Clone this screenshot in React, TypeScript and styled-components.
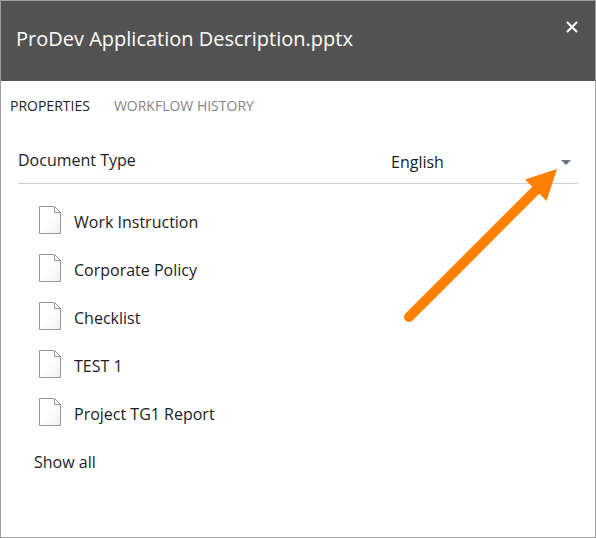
import React from 'react';
import styled, { createGlobalStyle } from 'styled-components';

const Global = createGlobalStyle`
  *{box-sizing:border-box}
  body{margin:0;background:#fff;font-family:"Open Sans","Noto Sans",sans-serif;font-weight:400;color:#1c1c1c}
`;
const Dialog = styled.div`width:596px;height:538px;border:1px solid #9c9c9c;background:#fff;display:flex;flex-direction:column;`;
const Header = styled.header`height:80px;background:#535353;color:#fff;display:flex;justify-content:space-between;padding:0 15px;`;
const Title = styled.h1`margin:0;font-size:20px;font-weight:400;line-height:76px;white-space:nowrap;`;
const Close = styled.button`border:0;background:none;padding:0;margin:20px 2px 0 0;width:12px;height:12px;display:flex;`;
const Tabs = styled.nav`display:flex;gap:24px;padding:15px 9px 0;height:62px;font-size:14px;line-height:20px;`;
const Tab = styled.span<{ $active?: boolean }>`color:${p => (p.$active ? '#222' : '#858585')};white-space:nowrap;`;
const TypeRow = styled.div`display:flex;height:41px;margin:0 17px;border-bottom:1px solid #d0d0d0;font-size:16px;line-height:22px;padding-top:6px;`;
const Label = styled.span`width:373px;`;
const Select = styled.div`flex:1;display:flex;justify-content:space-between;padding:2px 7px 0 0;`;
const Caret = styled.svg`margin-top:9px;`;
const List = styled.ul`list-style:none;margin:14px 0 0;padding:0 0 0 38px;`;
const Item = styled.li`height:48px;display:flex;align-items:center;gap:13px;font-size:16px;`;
const FileIcon = styled.svg`margin-bottom:4px;`;
const ShowAll = styled.a`font-size:16px;line-height:22px;margin:13px 0 0 33px;`;
const Arrow = styled.svg`position:absolute;left:0;top:0;pointer-events:none;`;

const docs = ['Work Instruction', 'Corporate Policy', 'Checklist', 'TEST 1', 'Project TG1 Report'];

export default function App() {
  return (
    <Dialog>
      <Global />
      <Header>
        <Title>ProDev Application Description.pptx</Title>
        <Close aria-label="Close"><svg width="12" height="12"><path d="M1 1l10 10M11 1L1 11" stroke="#fff" strokeWidth="2" /></svg></Close>
      </Header>
      <Tabs><Tab $active>PROPERTIES</Tab><Tab>WORKFLOW HISTORY</Tab></Tabs>
      <TypeRow>
        <Label>Document Type</Label>
        <Select>English<Caret width="10" height="5"><path d="M0 0h10L5 5z" fill="#6a747c" /></Caret></Select>
      </TypeRow>
      <List>
        {docs.map(d => (
          <Item key={d}>
            <FileIcon width="22" height="28">
              <defs>
                <linearGradient id="paper" x1="0" y1="0" x2="1" y2="1">
                  <stop offset="0.5" stopColor="#fff" /><stop offset="1" stopColor="#f0f0f0" />
                </linearGradient>
              </defs>
              <path d="M.5.5h15l6 6v21H.5zM15.5.5v6h6" fill="url(#paper)" stroke="#979797" />
            </FileIcon>
            {d}
          </Item>
        ))}
      </List>
      <ShowAll>Show all</ShowAll>
      <Arrow width="596" height="538"><path d="M409 317L542 184" stroke="#ff8000" strokeWidth="10" strokeLinecap="round" /><path d="M557 169L525 179.5L546.5 201z" fill="#ff8000" /></Arrow>
    </Dialog>
  );
}
